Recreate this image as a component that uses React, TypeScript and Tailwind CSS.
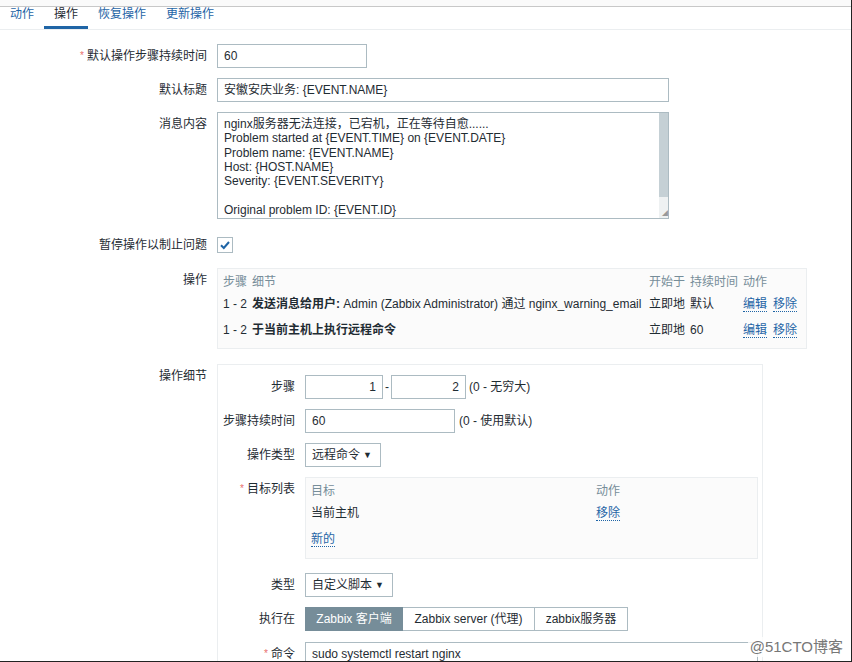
import type { ReactNode } from 'react';

const labelCls = 'w-[217px] shrink-0 pr-[10px] text-right leading-[24px]';
const inputCls = 'h-[24px] border border-[#acbbc2] bg-white px-[6px] leading-[22px]';
const linkCls = 'text-[#1f65a6] border-b border-dotted border-[#1f65a6] leading-[14px]';

function Req() {
  return <span className="mr-[3px] align-top text-[10px] text-[#e86f6c]">*</span>;
}

function Row({ label, children, className = '' }: { label: ReactNode; children: ReactNode; className?: string }) {
  return (
    <div className={`flex ${className}`}>
      <div className={labelCls}>{label}</div>
      <div className="flex-1">{children}</div>
    </div>
  );
}

function InnerRow({ label, children, className = '' }: { label: ReactNode; children: ReactNode; className?: string }) {
  return (
    <div className={`flex ${className}`}>
      <div className="w-[87px] shrink-0 pr-[10px] text-right leading-[24px]">{label}</div>
      <div className="flex-1">{children}</div>
    </div>
  );
}

function Select({ value, width }: { value: string; width: string }) {
  return (
    <div className={`${inputCls} ${width} flex items-center justify-between pr-[8px]`}>
      <span>{value}</span>
      <span className="text-[9px]">▼</span>
    </div>
  );
}

export default function App() {
  return (
    <div className="relative h-[662px] w-[852px] overflow-hidden border-r border-b border-[#222] bg-white text-[12px] text-[#1f2c33] font-[family-name:'Liberation_Sans','Noto_Sans_CJK_SC',sans-serif]">
      {/* top strip */}
      <div className="h-[7px] border-b border-[#c8c8c8] bg-[#fafafa]" />

      {/* tabs */}
      <div className="flex h-[23px] border-b border-[#ebeef0]">
        <div className="h-[22px] px-[10px] leading-[14px] text-[#1f65a6]">动作</div>
        <div className="h-[22px] border-b-[3px] border-[#1f65a6] px-[10px] leading-[14px]">操作</div>
        <div className="h-[22px] px-[10px] leading-[14px] text-[#1f65a6]">恢复操作</div>
        <div className="h-[22px] px-[10px] leading-[14px] text-[#1f65a6]">更新操作</div>
      </div>

      {/* form */}
      <div className="pt-[14px]">
        <Row label={<><Req />默认操作步骤持续时间</>}>
          <div className={`${inputCls} w-[150px]`}>60</div>
        </Row>

        <Row label="默认标题" className="mt-[10px]">
          <div className={`${inputCls} w-[452px]`}>安徽安庆业务: {'{EVENT.NAME}'}</div>
        </Row>

        <Row label="消息内容" className="mt-[10px]">
          <div className="flex h-[107px] w-[452px] border border-[#acbbc2] bg-white">
            <div className="flex-1 pl-[6px] pt-[4px] leading-[14.3px]">
              <div>nginx服务器无法连接，已宕机，正在等待自愈......</div>
              <div>Problem started at {'{EVENT.TIME}'} on {'{EVENT.DATE}'}</div>
              <div>Problem name: {'{EVENT.NAME}'}</div>
              <div>Host: {'{HOST.NAME}'}</div>
              <div>Severity: {'{EVENT.SEVERITY}'}</div>
              <div>&nbsp;</div>
              <div>Original problem ID: {'{EVENT.ID}'}</div>
            </div>
            <div className="flex w-[9px] flex-col bg-[#eef1f2]">
              <div className="h-[84px] bg-[#c5d0d5]" />
              <div className="flex-1" />
              <div className="h-[9px] text-[6px] leading-[9px] text-[#999] text-right">◢</div>
            </div>
          </div>
        </Row>

        <Row label="暂停操作以制止问题" className="mt-[14px]">
          <div className="flex h-[24px] items-center">
            <div className="flex h-[16px] w-[16px] items-center justify-center border border-[#acbbc2] bg-white">
              <svg width="12" height="12" viewBox="0 0 12 12" fill="none">
                <path d="M2 6.2 L4.8 9 L10 3" stroke="#1f65a6" strokeWidth="2" />
              </svg>
            </div>
          </div>
        </Row>

        {/* operations list */}
        <Row label="操作" className="mt-[11px]">
          <div className="w-[590px] border border-[#ebeef0] bg-[#fbfbfb] px-[5px] pt-[4px] pb-[4px]">
            <div className="grid grid-cols-[29px_397px_41px_53px_1fr]">
              <div className="leading-[18px] text-[#768d99]">步骤</div>
              <div className="leading-[18px] text-[#768d99]">细节</div>
              <div className="leading-[18px] text-[#768d99]">开始于</div>
              <div className="leading-[18px] text-[#768d99]">持续时间</div>
              <div className="leading-[18px] text-[#768d99]">动作</div>

              <div className="leading-[26px]">1 - 2</div>
              <div className="leading-[26px] whitespace-nowrap">
                <b>发送消息给用户:</b> Admin (Zabbix Administrator) 通过 nginx_warning_email
              </div>
              <div className="leading-[26px]">立即地</div>
              <div className="leading-[26px]">默认</div>
              <div className="flex items-center gap-[6px]">
                <span className={linkCls}>编辑</span>
                <span className={linkCls}>移除</span>
              </div>

              <div className="leading-[27px]">1 - 2</div>
              <div className="leading-[27px]">
                <b>于当前主机上执行远程命令</b>
              </div>
              <div className="leading-[27px]">立即地</div>
              <div className="leading-[27px]">60</div>
              <div className="flex items-center gap-[6px]">
                <span className={linkCls}>编辑</span>
                <span className={linkCls}>移除</span>
              </div>
            </div>
          </div>
        </Row>

        {/* operation details */}
        <Row label="操作细节" className="mt-[15px]">
          <div className="h-[320px] w-[546px] border border-[#ebeef0] bg-white pt-[10px]">
            <InnerRow label="步骤">
              <div className="flex items-center">
                <div className={`${inputCls} w-[78px] text-right`}>1</div>
                <span className="mx-[2px]">-</span>
                <div className={`${inputCls} w-[75px] text-right`}>2</div>
                <span className="ml-[3px]">(0 - 无穷大)</span>
              </div>
            </InnerRow>

            <InnerRow label="步骤持续时间" className="mt-[10px]">
              <div className="flex items-center">
                <div className={`${inputCls} w-[150px]`}>60</div>
                <span className="ml-[4px]">(0 - 使用默认)</span>
              </div>
            </InnerRow>

            <InnerRow label="操作类型" className="mt-[10px]">
              <Select value="远程命令" width="w-[76px]" />
            </InnerRow>

            <InnerRow label={<><Req />目标列表</>} className="mt-[10px]">
              <div className="h-[82px] w-[453px] border border-[#ebeef0] bg-[#fbfbfb] px-[5px] pt-[4px]">
                <div className="grid grid-cols-[285px_1fr]">
                  <div className="leading-[18px] text-[#768d99]">目标</div>
                  <div className="leading-[18px] text-[#768d99]">动作</div>
                  <div className="leading-[26px]">当前主机</div>
                  <div className="flex items-center">
                    <span className={linkCls}>移除</span>
                  </div>
                </div>
                <div className="mt-[6px] flex">
                  <span className={linkCls}>新的</span>
                </div>
              </div>
            </InnerRow>

            <InnerRow label="类型" className="mt-[14px]">
              <Select value="自定义脚本" width="w-[88px]" />
            </InnerRow>

            <InnerRow label="执行在" className="mt-[10px]">
              <div className="flex h-[24px]">
                <div className="w-[98px] border border-[#768d99] bg-[#768d99] text-center leading-[22px] text-white">
                  Zabbix 客户端
                </div>
                <div className="w-[132px] border border-l-0 border-[#acbbc2] text-center leading-[22px]">
                  Zabbix server (代理)
                </div>
                <div className="w-[93px] border border-l-0 border-[#acbbc2] text-center leading-[22px]">
                  zabbix服务器
                </div>
              </div>
            </InnerRow>

            <InnerRow label={<><Req />命令</>} className="mt-[11px]">
              <div className={`${inputCls} w-[453px] h-[40px]`}>sudo systemctl restart nginx</div>
            </InnerRow>
          </div>
        </Row>
      </div>

      {/* watermark */}
      <div className="absolute right-[6px] bottom-[4px] bg-white/80 px-[2px] text-[15px] leading-[20px] text-[#777]">
        @51CTO博客
      </div>
    </div>
  );
}
